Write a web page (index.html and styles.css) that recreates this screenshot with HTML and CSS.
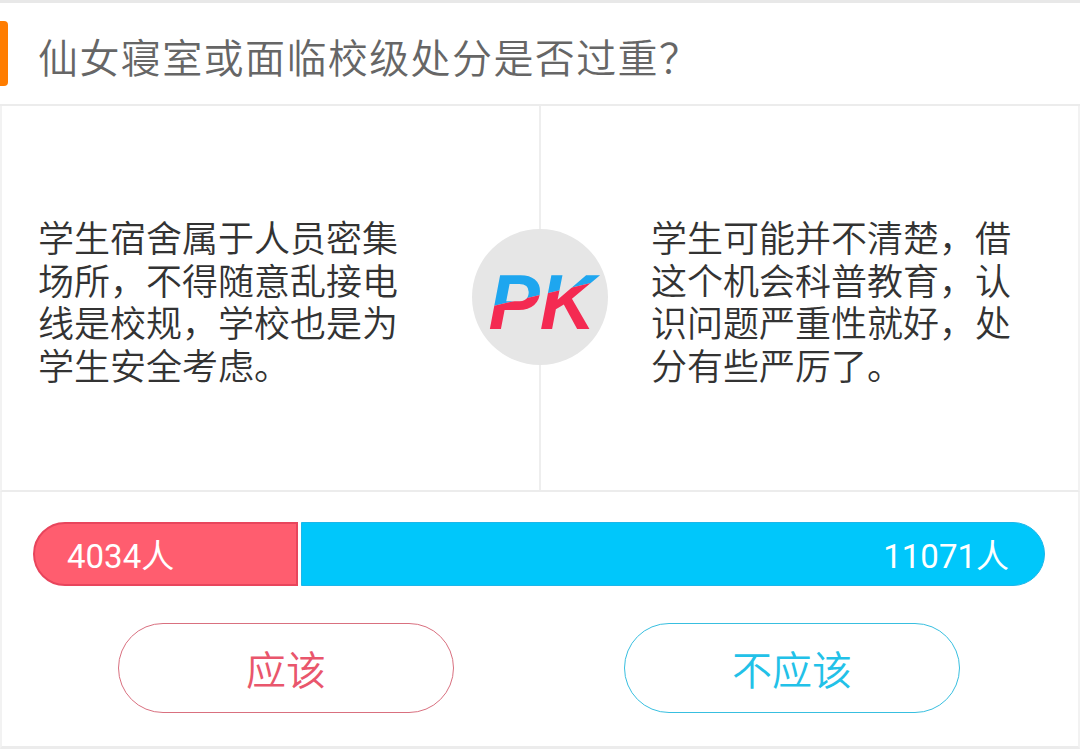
FILE: index.html
```html
<!DOCTYPE html>
<html lang="zh">
<head>
    <meta charset="UTF-8">
    <meta name="viewport" content="width=device-width, initial-scale=1.0">
    <title>仙女寝室或面临校级处分是否过重？</title>
    <link rel="stylesheet" href="styles.css">
</head>
<body>
    <div id="card">
        <div id="title-row">
            <span class="mark"></span>
            <h1>仙女寝室或面临校级处分是否过重？</h1>
        </div>

        <div id="versus">
            <div class="side side-left">
                <p>学生宿舍属于人员密集场所，不得随意乱接电线是校规，学校也是为学生安全考虑。</p>
            </div>
            <div class="side side-right">
                <p>学生可能并不清楚，借这个机会科普教育，认识问题严重性就好，处分有些严厉了。</p>
            </div>

            <!-- PK badge sits on the divider -->
            <svg id="pk" width="136" height="136" viewBox="0 0 136 136">
                <defs>
                    <clipPath id="pk-top"><polygon points="0,0 136,0 136,50 0,82"/></clipPath>
                    <clipPath id="pk-bottom"><polygon points="0,82 136,50 136,136 0,136"/></clipPath>
                </defs>
                <circle cx="68" cy="68" r="68" fill="#e6e6e6"/>
                <text class="pk-text" x="70" y="100" text-anchor="middle" fill="#1ea6ef" clip-path="url(#pk-top)">PK</text>
                <text class="pk-text" x="70" y="100" text-anchor="middle" fill="#f42a52" clip-path="url(#pk-bottom)">PK</text>
            </svg>
        </div>

        <div id="vote">
            <div class="bar">
                <div class="bar-yes" style="width: 265px;">4034人</div>
                <div class="bar-no">11071人</div>
            </div>
            <div class="buttons">
                <div class="cell"><button class="btn btn-yes">应该</button></div>
                <div class="cell"><button class="btn btn-no">不应该</button></div>
            </div>
        </div>
    </div>
</body>
</html>
```

FILE: styles.css
```css
* {margin: 0; padding: 0; box-sizing: border-box;}

body {
    font-family: "Noto Sans CJK SC", "Liberation Sans", sans-serif;
    background-color: #fff;
    width: 1080px;
    height: 752px;
    overflow: hidden;
}

#card {
    border-top: 3px solid #e8e8e8;
}

#title-row {
    height: 103px;
    display: flex;
    align-items: center;
    border-bottom: 2px solid #ececec;
}
#title-row .mark {
    width: 8px;
    height: 65px;
    background-color: #ff7d00;
    border-radius: 0 4px 4px 0;
}
#title-row h1 {
    font-size: 40px;
    font-weight: 350;
    color: #666;
    margin-left: 30px;
    padding-top: 4px;
    letter-spacing: 1.4px;
}

#versus {
    position: relative;
    height: 386px;
    display: flex;
    border-left: 2px solid #f2f2f2;
    border-right: 2px solid #f2f2f2;
    border-bottom: 2px solid #ececec;
}
.side {
    display: flex;
    align-items: center;
    padding-top: 4px;
}
.side p {
    width: 362px;
    font-size: 36px;
    font-weight: 350;
    line-height: 42.5px;
    color: #333;
}
.side-left {
    width: 539px;
    border-right: 2px solid #eeeeee;
    padding-left: 36px;
}
.side-right {
    flex: 1;
    padding-left: 110px;
}

#pk {
    position: absolute;
    left: 470px;
    top: 123px;
}
.pk-text {
    font-family: "Liberation Sans", Arial, sans-serif;
    font-size: 77px;
    font-weight: bold;
    font-style: italic;
}

#vote {
    height: 257px;
    padding: 30px 33px 0 31px;
    border-left: 2px solid #f2f2f2;
    border-right: 2px solid #f2f2f2;
    border-bottom: 3px solid #ececec;
}

.bar {
    display: flex;
    height: 64px;
    gap: 3px;
    width: 1012px;
}
.bar-yes, .bar-no {
    display: flex;
    align-items: center;
    color: #fff;
    font-family: Roboto, "Noto Sans CJK SC", sans-serif;
    font-size: 33px;
}
.bar-yes {
    background-color: #ff5d6f;
    border: 2px solid #e8455c;
    border-radius: 32px 0 0 32px;
    padding-left: 32px;
}
.bar-no {
    flex: 1;
    justify-content: flex-end;
    background-color: #00c7fb;
    border: 1px solid #1cb6ea;
    border-radius: 0 32px 32px 0;
    padding-right: 35px;
}

.buttons {
    display: flex;
    margin-top: 37px;
}
.buttons .cell {
    flex: 1;
    display: flex;
    justify-content: center;
}
.btn {
    width: 336px;
    height: 90px;
    border-radius: 45px;
    background-color: #fff;
    font-family: "Noto Sans CJK SC", sans-serif;
    font-size: 40px;
    font-weight: 350;
    cursor: pointer;
}
.btn-yes {
    border: 1.5px solid #d9707f;
    color: #e9566c;
}
.btn-no {
    border: 1.5px solid #38bfe0;
    color: #22c1e8;
}
```
